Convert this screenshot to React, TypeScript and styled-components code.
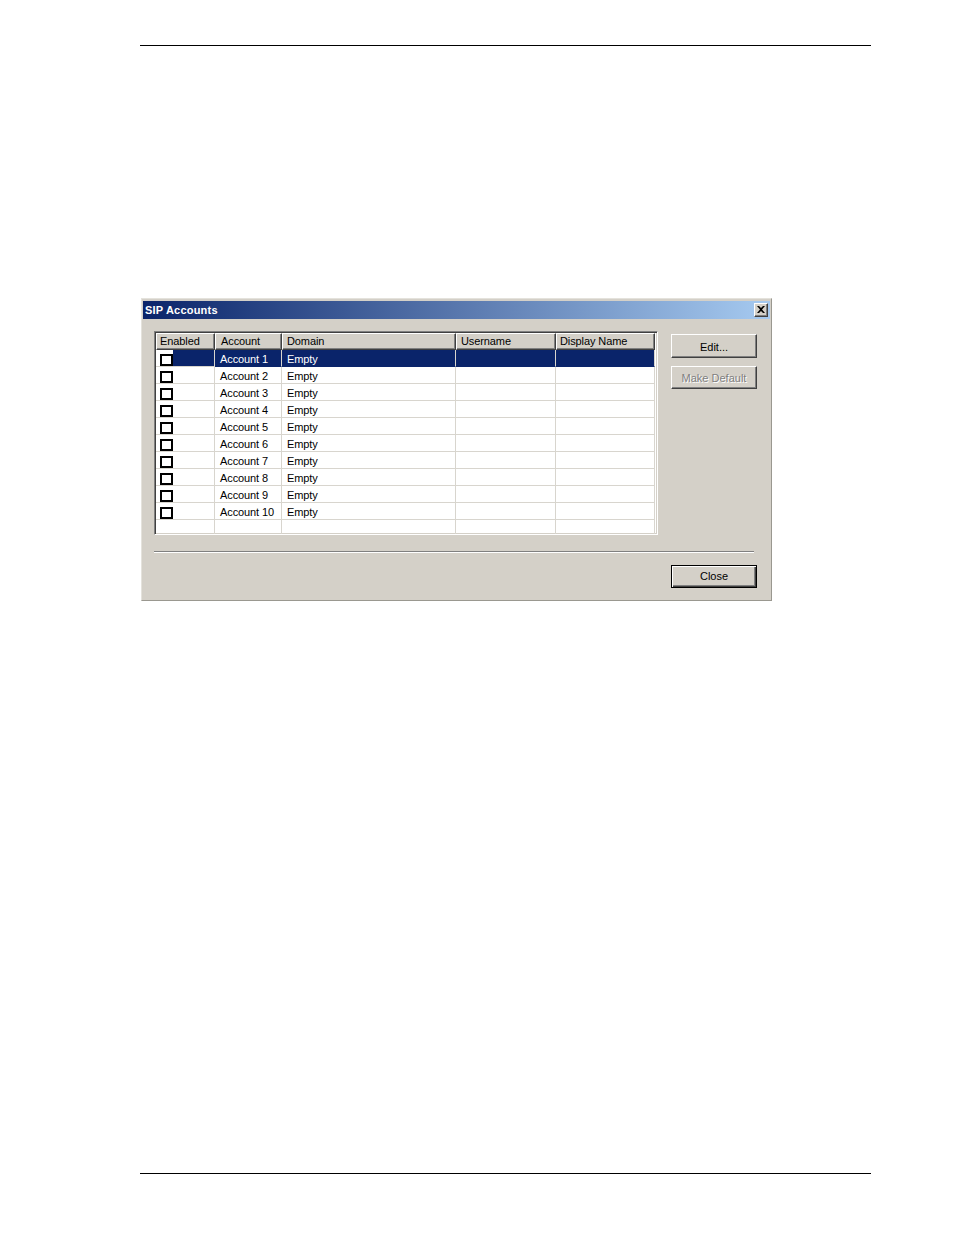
import React from "react";
import styled, { createGlobalStyle } from "styled-components";

const Global = createGlobalStyle`
  * { box-sizing: border-box; }
  html, body { margin: 0; padding: 0; background: #ffffff; }
  body { font-family: "Liberation Sans", Arial, sans-serif; font-size: 11px; color: #000; }
`;

const Page = styled.div`
  width: 954px;
  min-height: 1235px;
  padding-top: 45px;
  display: flex;
  flex-direction: column;
`;

const Rule = styled.div<{ $top: number }>`
  margin-top: ${(p) => p.$top}px;
  margin-left: 140px;
  width: 731px;
  height: 1px;
  background: #000;
`;

const Dialog = styled.div`
  margin-top: 252px;
  margin-left: 141px;
  width: 631px;
  height: 303px;
  background: #d4d0c8;
  border-top: 1px solid #e4e2dc;
  border-left: 1px solid #e4e2dc;
  border-right: 1px solid #9a9890;
  border-bottom: 1px solid #9a9890;
  padding: 2px 1px 1px 1px;
  display: flex;
  flex-direction: column;
`;

const TitleBar = styled.div`
  height: 18px;
  background: linear-gradient(to right, #0a246a 0%, #a6caf0 100%);
  display: flex;
  align-items: center;
  justify-content: space-between;
  padding: 0 2px 0 2px;
`;

const TitleText = styled.span`
  color: #fff;
  font-weight: bold;
  font-size: 11px;
  letter-spacing: 0.2px;
`;

const TitleClose = styled.div`
  width: 14px;
  height: 14px;
  margin-top: -1px;
  background: #d4d0c8;
  border-top: 1px solid #fff;
  border-left: 1px solid #fff;
  border-right: 1px solid #404040;
  border-bottom: 1px solid #404040;
  box-shadow: inset -1px -1px #808080;
  display: flex;
  align-items: center;
  justify-content: center;
`;

const Body = styled.div`
  flex: 1;
  display: flex;
  flex-direction: column;
  padding: 12px 0 0 11px;
`;

const TopSection = styled.div`
  display: flex;
  align-items: flex-start;
`;

const List = styled.div`
  width: 504px;
  height: 204px;
  background: #fff;
  border-top: 1px solid #808080;
  border-left: 1px solid #808080;
  border-right: 1px solid #fff;
  border-bottom: 1px solid #fff;
  box-shadow: inset 1px 1px #404040, inset -1px -1px #d4d0c8;
  padding: 1px;
  overflow: hidden;
`;

const cols = [59, 67, 174, 100, 99];

const HeaderRow = styled.div`
  display: flex;
  height: 17px;
`;

const HeaderCell = styled.div<{ $w: number; $pad: number }>`
  width: ${(p) => p.$w}px;
  flex: none;
  height: 17px;
  background: #d4d0c8;
  border-top: 1px solid #fff;
  border-left: 1px solid #fff;
  border-right: 1px solid #404040;
  border-bottom: 1px solid #404040;
  box-shadow: inset -1px -1px #808080;
  padding-left: ${(p) => p.$pad}px;
  line-height: 15px;
  white-space: nowrap;
  letter-spacing: -0.1px;
`;

const Row = styled.div<{ $sel?: boolean }>`
  display: flex;
  height: 17px;
  color: ${(p) => (p.$sel ? "#fff" : "#000")};
`;

const Cell = styled.div<{ $w: number; $sel?: boolean }>`
  width: ${(p) => p.$w}px;
  flex: none;
  height: 17px;
  background: ${(p) => (p.$sel ? "#0a246a" : "#fff")};
  border-right: 1px solid #d8d5ce;
  border-bottom: 1px solid ${(p) => (p.$sel ? "#0a246a" : "#d8d5ce")};
  padding-left: 5px;
  padding-top: 1px;
  line-height: 16px;
  white-space: nowrap;
  overflow: hidden;
  letter-spacing: -0.1px;
`;

const CheckCell = styled.div<{ $w: number }>`
  width: ${(p) => p.$w}px;
  flex: none;
  height: 17px;
  border-right: 1px solid #d8d5ce;
  border-bottom: 1px solid #d8d5ce;
  padding-left: 4px;
  display: flex;
  align-items: flex-start;
  background: #fff;
`;

const CheckBox = styled.div`
  width: 13px;
  height: 12px;
  margin-top: 4px;
  border: 2px solid #000;
  background: #fff;
  flex: none;
`;

const SelFill = styled.div<{ $sel?: boolean }>`
  flex: 1;
  height: 16px;
  background: ${(p) => (p.$sel ? "#0a246a" : "transparent")};
`;

const EmptyRow = styled.div`
  display: flex;
  height: 17px;
`;

const EmptyCell = styled.div<{ $w: number }>`
  width: ${(p) => p.$w}px;
  flex: none;
  height: 17px;
  border-right: 1px solid #d8d5ce;
`;

const ButtonCol = styled.div`
  display: flex;
  flex-direction: column;
  gap: 8px;
  margin-left: 13px;
  margin-top: 3px;
`;

const Button = styled.div<{ $disabled?: boolean; $h?: number }>`
  width: 86px;
  height: ${(p) => p.$h ?? 24}px;
  padding-top: 1px;
  background: #d4d0c8;
  border-top: 1px solid #fff;
  border-left: 1px solid #fff;
  border-right: 1px solid #404040;
  border-bottom: 1px solid #404040;
  box-shadow: inset -1px -1px #808080;
  display: flex;
  align-items: center;
  justify-content: center;
  color: ${(p) => (p.$disabled ? "#808080" : "#000")};
  text-shadow: ${(p) => (p.$disabled ? "1px 1px 0 #fff" : "none")};
`;

const DefaultButton = styled.div`
  width: 86px;
  height: 23px;
  background: #d4d0c8;
  border: 1px solid #000;
  box-shadow: inset 1px 1px #fff, inset -1px -1px #404040, inset -2px -2px #808080;
  display: flex;
  align-items: center;
  justify-content: center;
  padding-bottom: 1px;
`;

const Separator = styled.div`
  margin-top: 16px;
  width: 600px;
  height: 2px;
  border-top: 1px solid #808080;
  border-bottom: 1px solid #fff;
`;

const BottomRow = styled.div`
  margin-top: 12px;
  padding-left: 517px;
  display: flex;
`;

const accounts = Array.from({ length: 10 }, (_, i) => `Account ${i + 1}`);
const headers = ["Enabled", "Account", "Domain", "Username", "Display Name"];
const headerPads = [3, 5, 4, 4, 3];

export default function App() {
  return (
    <>
      <Global />
      <Page>
        <Rule $top={0} />
        <Dialog>
          <TitleBar>
            <TitleText>SIP Accounts</TitleText>
            <TitleClose>
              <svg width="8" height="7" viewBox="0 0 8 7">
                <path d="M0 0 L2 0 L4 2 L6 0 L8 0 L5 3.5 L8 7 L6 7 L4 5 L2 7 L0 7 L3 3.5 Z" fill="#000" />
              </svg>
            </TitleClose>
          </TitleBar>
          <Body>
            <TopSection>
              <List>
                <HeaderRow>
                  {headers.map((h, i) => (
                    <HeaderCell key={h} $w={cols[i]} $pad={headerPads[i]}>
                      {h}
                    </HeaderCell>
                  ))}
                </HeaderRow>
                {accounts.map((a, i) => {
                  const sel = i === 0;
                  return (
                    <Row key={a} $sel={sel}>
                      <CheckCell $w={cols[0]}>
                        <CheckBox />
                        <SelFill $sel={sel} />
                      </CheckCell>
                      <Cell $w={cols[1]} $sel={sel}>
                        {a}
                      </Cell>
                      <Cell $w={cols[2]} $sel={sel}>
                        Empty
                      </Cell>
                      <Cell $w={cols[3]} $sel={sel} />
                      <Cell $w={cols[4]} $sel={sel} />
                    </Row>
                  );
                })}
                <EmptyRow>
                  {cols.map((w, i) => (
                    <EmptyCell key={i} $w={w} />
                  ))}
                </EmptyRow>
              </List>
              <ButtonCol>
                <Button>Edit...</Button>
                <Button $disabled $h={23}>
                  Make Default
                </Button>
              </ButtonCol>
            </TopSection>
            <Separator />
            <BottomRow>
              <DefaultButton>Close</DefaultButton>
            </BottomRow>
          </Body>
        </Dialog>
        <Rule $top={572} />
      </Page>
    </>
  );
}
